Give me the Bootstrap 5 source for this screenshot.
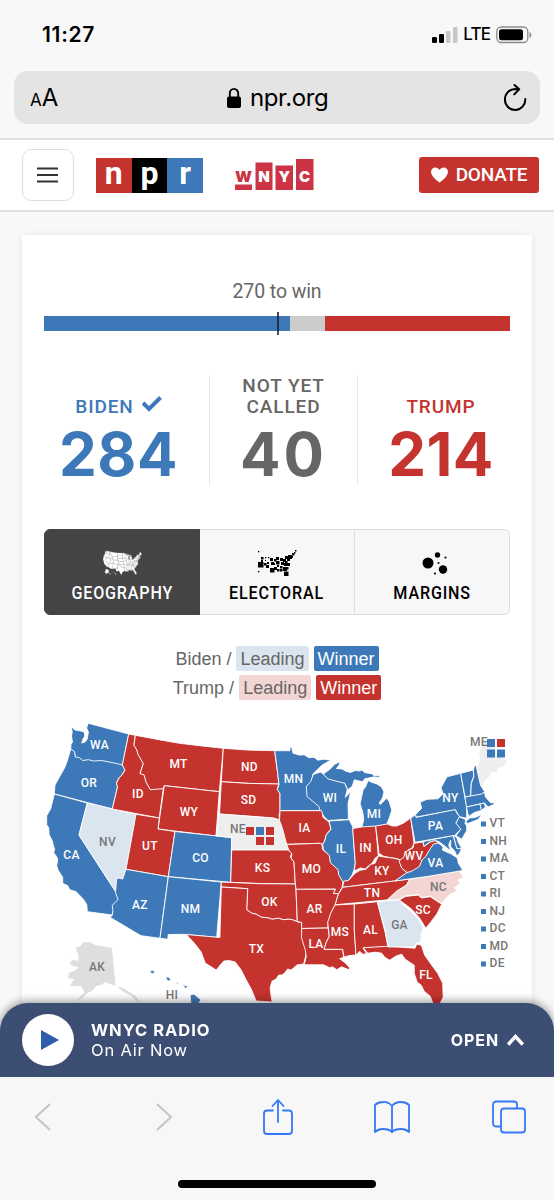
<!DOCTYPE html>
<html lang="en">
<head>
    <meta charset="UTF-8">
    <meta name="viewport" content="width=device-width, initial-scale=1.0">
    <title>Election Results : NPR</title>
    <link href="https://cdn.jsdelivr.net/npm/bootstrap@5.3.0/dist/css/bootstrap.min.css" rel="stylesheet">
    <style>
        :root { --dem: #3d79b8; --rep: #c4332d; --dem-light: #dae5f0; --rep-light: #f3d5d4; }
        body { height: 1200px; overflow: hidden; background: #f8f8f8; font-family: Roboto, "Liberation Sans", sans-serif; }
        svg { display: block; flex: none; }
        .ios { font-family: Inter, "Liberation Sans", sans-serif; color: #000; }
        .status-bar { height: 71px; padding: 0 22px 2px 42px; }
        .clock { font-size: 21px; font-weight: 600; letter-spacing: .7px; }
        .lte { font-size: 17px; font-weight: 500; letter-spacing: -.9px; margin: 0 6px 0 5px; }
        .url-bar { height: 53px; margin: 0 14px; padding: 0 12px 0 16px; border-radius: 14px; background: #e4e4e5; }
        .url-text { font-size: 24px; letter-spacing: -.4px; line-height: 1; }
        .url-site { margin-right: 9px; gap: 5px; }
        .text-size { font-size: 17px; letter-spacing: 0; line-height: 1; }
        .text-size b { font-size: 24px; font-weight: 400; }
        .site-header { height: 74px; margin-top: 14px; padding: 0 15px 0 22px; background: #fff; border-top: 2px solid #dfdfdf; border-bottom: 2px solid #dfdfdf; }
        .menu-btn { width: 52px; height: 52px; border: 1.5px solid #dedede; border-radius: 9px; background: #fff; }
        .menu-btn svg { margin-right: 2px; }
        .npr { width: 107px; height: 35px; margin-left: 22px; font: 700 32px/31px Roboto, sans-serif; color: #fff; }
        .npr span { flex: 1; text-align: center; }
        .wnyc { margin-left: 32px; }
        .donate { width: 120px; height: 36px; padding: 0; border-radius: 3px; background: var(--rep); color: #fff; font-size: 19px; font-weight: 500; letter-spacing: -.2px; }
        .results { width: 510px; height: 790px; margin: 23px auto 0; padding: 0; background: #fff; box-shadow: 0 0 7px rgba(0,0,0,.07); }
        .to-win { padding-top: 45px; font-size: 19.5px; line-height: 24px; letter-spacing: -.1px; color: #666; }
        .ev-bar { height: 15px; margin: 12px 22px 0; position: relative; background: #ccc; }
        .ev-tick { position: absolute; left: 50%; top: -4px; width: 1.5px; height: 23px; background: rgba(30,30,40,.8); }
        .tally { height: 110px; margin: 44px 22px 0; }
        .tally > div { justify-content: flex-end; }
        .t-dem { width: 165px; padding-right: 16px; color: var(--dem); }
        .t-none { width: 149px; border-left: 1.5px solid #e6e6e6; border-right: 1.5px solid #e6e6e6; color: #666; }
        .t-rep { width: 152px; padding-left: 14px; color: var(--rep); }
        .who { font-size: 19px; font-weight: 500; line-height: 21px; letter-spacing: .9px; }
        .votes { font: 700 60px/60px Inter, sans-serif; letter-spacing: .5px; margin: 7px 0 1px; height: 60px; }
        .t-none .votes { letter-spacing: 3px; }
        .views { height: 86px; margin: 44px 22px 0; border-radius: 6px; }
        .views .btn { padding: 11px 0 0; border: 1.5px solid #ddd; background: #f7f7f7; color: #000; font-size: 17.5px; font-weight: 500; letter-spacing: .9px; line-height: 24px; border-radius: 6px; }
        .views .btn svg { margin: 0 auto 5px; }
        .views .btn span { display: inline-block; transform: scaleX(.92); }
        .views .btn.active { background: #444; border-color: #444; color: #fff; }
        .key { margin-top: 31px; gap: 4px; font: 18px/26px "Liberation Sans", Arial, sans-serif; color: #666; }
        .key > div { gap: 5px; height: 25px; }
        .chip { height: 25px; padding: 0 4px; border-radius: 2px; line-height: 27px; }
        .lead-dem { background: var(--dem-light); } .win-dem { background: var(--dem); color: #fff; }
        .lead-rep { background: var(--rep-light); } .win-rep { background: var(--rep); color: #fff; }
        .map { margin-top: 9px; font: 500 12px Roboto, sans-serif; letter-spacing: .3px; }
        .map path { stroke: #fff; stroke-width: .9; stroke-linejoin: round; }
        .player { left: 0; right: 0; top: 1003px; height: 74px; padding: 0 30px 0 22px; border-radius: 28px 28px 0 0; background: #3d4e74; color: #fff; box-shadow: 0 -2px 9px rgba(0,0,0,.4); font-family: Inter, sans-serif; }
        .play { width: 52px; height: 52px; background: #fff; }
        .station { margin-left: 17px; font-size: 16.5px; line-height: 20px; letter-spacing: .8px; }
        .station .fw-bold { letter-spacing: 1px; }
        .open { font-size: 16px; letter-spacing: .9px; }
        .toolbar { left: 0; right: 0; top: 1077px; height: 123px; background: #f7f7f7; }
        .toolbar .tools { height: 80px; padding: 0 28px 0 34px; }
        .home { width: 198px; height: 8px; margin: 23px auto 0; border-radius: 4px; background: #000; }
    </style>
</head>
<body>
    <div class="ios status-bar d-flex align-items-center">
        <span class="clock me-auto">11:27</span>
        <svg width="26" height="18" viewBox="0 0 26 18">
            <rect x="0" y="11" width="5" height="6" rx="1.3"/><rect x="7" y="8" width="5" height="9" rx="1.3"/>
            <rect x="14" y="5" width="4.5" height="12" rx="1.3" fill="#c7c7c7"/><rect x="21" y="1" width="4.5" height="16" rx="1.3" fill="#c7c7c7"/>
        </svg>
        <span class="lte">LTE</span>
        <svg width="36" height="18" viewBox="0 0 36 18">
            <rect x=".8" y="1" width="31" height="15.5" rx="4.5" fill="none" stroke="#8b8b8b" stroke-width="1.3"/>
            <rect x="3" y="3.2" width="24" height="11" rx="2.5"/><path d="M33.5 6v6q2-.8 2-3t-2-3" fill="#8b8b8b"/>
        </svg>
    </div>
    <div class="ios url-bar d-flex align-items-center justify-content-between">
        <span class="text-size">A<b>A</b></span>
        <div class="url-site d-flex align-items-center">
            <svg width="22" height="22" viewBox="0 0 22 22"><rect x="4" y="9.5" width="14" height="11.5" rx="2"/><path d="M6.8 11V6.5a4.2 4.6 0 0 1 8.4 0V11" fill="none" stroke="#000" stroke-width="1.9"/></svg>
            <span class="url-text">npr.org</span>
        </div>
        <svg width="26" height="30" viewBox="0 0 26 30" fill="none" stroke="#000" stroke-width="2" stroke-linecap="round" stroke-linejoin="round"><path d="M13.5 6A10.2 10.5 0 1 0 23.3 16M12.5 2l4.7 4.2-5 5.2M16.6 6.2H13"/></svg>
    </div>

    <header class="site-header d-flex align-items-center">
        <button class="menu-btn d-flex align-items-center justify-content-center p-0">
            <svg width="21" height="16" stroke="#333" stroke-width="2.2"><path d="M0 1.5h21M0 8h21M0 14.5h21"/></svg>
        </button>
        <div class="npr d-flex"><span class="win-rep">n</span><span class="bg-black">p</span><span class="win-dem">r</span></div>
        <svg class="wnyc me-auto" width="80" height="32" font-family="Inter, sans-serif" font-weight="900" font-size="15" text-anchor="middle" fill="#cc3344">
            <path d="M0 25.500h17v5.500H0zM20.500 3.500h17V31h-17zM40.500 6.500h17.500V31H40.500zM61 0h17.500v31H61z"/>
            <text x="8.5" y="22.500" textLength="17" lengthAdjust="spacingAndGlyphs">W</text>
            <g fill="#fff"><text x="29" y="22.500">N</text><text x="49.300" y="22.500">Y</text><text x="69.500" y="22.500">C</text></g>
        </svg>
        <button class="btn donate d-flex align-items-center justify-content-center gap-2">
            <svg width="17" height="16" viewBox="0 0 17 16" fill="#fff"><path d="M8.500 15.500Q0 9.500 0 5C0-.5 6.500-1 8.500 3 10.500-1 17-.5 17 5q0 4.500-8.500 10.500"/></svg>DONATE
        </button>
    </header>

    <main class="results">
        <div class="to-win text-center">270 to win</div>
        <div class="ev-bar d-flex justify-content-between">
            <div class="win-dem" style="width:52.79%"></div>
            <div class="win-rep" style="width:39.78%"></div>
            <i class="ev-tick"></i>
        </div>
        <div class="tally d-flex text-center">
            <div class="t-dem d-flex flex-column">
                <div class="who d-flex justify-content-center">BIDEN
                    <svg class="ms-2" width="20" height="16" fill="none" stroke="#3d79b8" stroke-width="4"><path d="M1 7l6 6L18.500 1.500"/></svg>
                </div>
                <div class="votes">284</div>
            </div>
            <div class="t-none d-flex flex-column"><div class="who">NOT YET<br>CALLED</div><div class="votes">40</div></div>
            <div class="t-rep d-flex flex-column"><div class="who">TRUMP</div><div class="votes">214</div></div>
        </div>
        <div class="views btn-group d-flex">
            <button class="btn active w-100"><svg id="miniMap" width="39" height="26" viewBox="46 722 463 292" fill="#fff"></svg><span>GEOGRAPHY</span></button>
            <button class="btn w-100"><svg id="blocks" width="39" height="26"></svg><span>ELECTORAL</span></button>
            <button class="btn w-100">
                <svg width="39" height="26"><circle cx="15" cy="13" r="5.500"/><circle cx="24.500" cy="5" r="2.700"/><circle cx="30" cy="19.500" r="4.200"/><circle cx="32.500" cy="7.500" r="1.100"/><circle cx="25.500" cy="13" r="1"/><circle cx="22" cy="23.500" r="1.100"/></svg><span>MARGINS</span>
            </button>
        </div>
        <div class="key d-flex flex-column align-items-center">
            <div class="d-flex"><span>Biden /</span><span class="chip lead-dem">Leading</span><span class="chip win-dem">Winner</span></div>
            <div class="d-flex"><span>Trump /</span><span class="chip lead-rep">Leading</span><span class="chip win-rep">Winner</span></div>
        </div>
        <svg id="map" class="map" width="510" height="300" viewBox="22 709 510 300"></svg>
    </main>

    <div class="player position-fixed d-flex align-items-center">
        <div class="play rounded-circle d-flex align-items-center justify-content-center"><svg width="20" height="22" class="ms-1"><path d="M1 1v20l18-10z" fill="#2f5cab"/></svg></div>
        <div class="station me-auto"><div class="fw-bold">WNYC RADIO</div><div>On Air Now</div></div>
        <span class="open fw-bold me-2">OPEN</span>
        <svg width="17" height="12" fill="none" stroke="#fff" stroke-width="3.500"><path d="M1.200 10.500l7.300-8 7.300 8"/></svg>
    </div>
    <footer class="toolbar position-fixed">
        <div class="tools d-flex align-items-center justify-content-between">
            <svg width="17" height="28" fill="none" stroke="#c4c4c6" stroke-width="2"><path d="M16 1L2 14l14 13"/></svg>
            <svg class="ms-4" width="17" height="28" fill="none" stroke="#c4c4c6" stroke-width="2"><path d="M1 1l14 13L1 27"/></svg>
            <svg class="ms-2" width="30" height="38" fill="none" stroke="#3478f6" stroke-width="1.800" stroke-linecap="round" stroke-linejoin="round"><path d="M10 12.500H4a3 3 0 0 0-3 3V33a3 3 0 0 0 3 3h22a3 3 0 0 0 3-3V15.500a3 3 0 0 0-3-3h-6M15 24V2.500M9.500 8L15 2l5.500 6"/></svg>
            <svg width="36" height="34" fill="none" stroke="#3478f6" stroke-width="1.800" stroke-linejoin="round"><path d="M18 6Q14 1.500 9 2 4 2 1 5v27q3-3 8-3 6 0 9 3 3-3 9-3 5 0 8 3V5q-3-3-8-3-6 0-9 4zv25"/></svg>
            <svg width="35" height="34" fill="none" stroke="#3478f6" stroke-width="1.800"><path d="M9 26.500H5a3 3 0 0 1-3-3V4.500a3 3 0 0 1 3-3h18a3 3 0 0 1 3 3v4"/><rect x="10" y="8.500" width="24" height="24" rx="3"/></svg>
        </div>
        <div class="home"></div>
    </footer>

    <script src="https://cdn.jsdelivr.net/npm/bootstrap@5.3.0/dist/js/bootstrap.bundle.min.js"></script>
    <script>
        const colors = { d: "#3d79b8", r: "#c4332d", dl: "#dae5f0", rl: "#f3d5d4", n: "#eeeeee", a: "#dedede" };

        // [status, label, label x, label y, outline]
        const states = [
            ["d", "WA", 99.5, 745, "M71.300 726l3.500 4 6 1 3.500 1 .5 4-1.800 3-1.300 4 3.500-1 2-3 1.200-7-1.800-4 1.500-4.800 40.600 10.800-6.400 32-9-2-11.500-2.300-8 .5-5.500-1.300-5.500.8-3.500-3-4-.5-.8-5.500-3.800-2.500.3-6 1.500-2-1-6 .7-4z"],
            ["d", "OR", 89, 783, "M70.700 749l3.800 2.500.8 5.500 4 .5 3.500 3 5.500-.8 5.500 1.300 8-.5 11.500 2.300 9 2 2.700 5-3 5-3 3-2.500 5 1 4-5.200 22.200-58-15 .7-9 5-9 5-9 2.500-7z"],
            ["d", "CA", 71.5, 855, "M54.300 794l33 9-8.300 32 36.700 56.700 3.300 7.600-5.700 5.700 1 4-2 6-25-3.300-.5-7-3.500-5.500-7.100-7.500-6.500-2-2-4-5-2.400 0-6-4.500-7-1.500-4.600 1-6-1-3-3-4 1-4-1-2-1.500-6-3-6-.5-7-2-3 0-9 4-7z"],
            ["dl", "NV", 107.5, 841.5, "M87.300 803l48.700 11.300-10 55-3.300 10-4-1.500-2 8-1 5.900L79 835z"],
            ["r", "ID", 138, 794, "M128.700 734l6.600 1.300-1.300 9.700 3 5 1 4 5.300 9.300-3.300 10 4 1 2.300 8 4 7 6-.5 7-.5-4 29.700-47-9 5.200-22-1-4 2.500-5 3-3 3-5-2.700-5z"],
            ["r", "MT", 178.5, 764, "M135.300 735.300q44 9.500 88 13l-4 43.400-55-6-1 3-7 .5-6 .5-4-7-2.300-8-4-1 3.300-10-5.300-9.300-1-4-3-5z"],
            ["r", "WY", 189, 812, "M164.300 785.700l55 6-3.300 44.300-58-7z"],
            ["r", "UT", 150, 846, "M136 814.300l23.300 3.700-1.300 11 17 2.500-6.700 45.200-42.300-7.400z"],
            ["d", "CO", 200.5, 858, "M175 831.500l56.700 6-1 44.800-62.400-5.600z"],
            ["d", "AZ", 140, 905, "M126 869.300l42.300 7.400-8.300 61.600-19-2.600-31-18.400 2.300-2 .5-5-.5-5 5.700-5.700-2.500-7 1.200-14 2.500-.5 3.500 1z"],
            ["d", "NM", 190.5, 909, "M168.300 876.700l53 5.300-4.600 55.300-33.400-3-15 .2-.6 4.800-7.700-1z"],
            ["r", "ND", 249.5, 767, "M223.300 748.300q25 2.400 51.400 2.400l1.500 12 1.500 10 1 11.300q-30 0-57.400-2.300z"],
            ["r", "SD", 248.5, 800, "M221.300 781.700q27 2.300 57.400 2.300l-1.400 5.300 2.700 4v17.400l-1 4 .5 5.300-6-2-6-.5-6-.5-42-3z"],
            ["n", "NE", 238, 829, "M219.300 814l42.400 3.300 10.500.7 7.500 2 3.600 10 2.700 10 2.300 10h-56.600v-12.500l-15.700-1.500z"],
            ["r", "KS", 262.5, 867.5, "M231.700 850h56.600l3.500 3-1.500 4 3.700 5 1.300 22q-32 .2-64.600-1.700z"],
            ["r", "OK", 269.500, 901.500, "M221.300 882q37 2.300 74 2l.7 5.300 1.300 32.400-5-2-4-.5-5 .5-5-1.500-6 1-5-1.500-6-.5-5-3-4.600-1-5-3.500 1-21-26.400-1.700z"],
            ["r", "TX", 256.5, 948.5, "M221.300 887l26.400 1.700-1 21 5 3.500 4.600 1 5 3 6 .5 5 1.500 6-1 5 1.500 5-.5 4 .5 5 2 4.400 1 .3 14.600 4.700 12.700-1 6-2 8-7 1-3 3-3 2-3-1-3 4-3 2-3 0-2.500 4-4 2-1 3-1 4 .5 5 1.500 9-16-1-5-12-5-9-5-10-6-8-6-1.500-5.500.5-7.500 9-11-7-4-11-7-9-8-8.500 33.700 3z"],
            ["d", "MN", 293.5, 779, "M274.700 750.700h15.300v-4l1.700.5 1.300 6 7 2 4-.5 5 3 5-.5 4 3 5-1 8 .8-9 5.200-9 8.600-1.500 8-4.400 4 .7 10 12.400 9.700 1.500 5h-41.700v-17l-2.700-4 1.700-5-1.300-11-1.500-12z"],
            ["d", "WI", 330, 798, "M313.300 774.500l7-2.500 3 2 4 4 9 2.500 8 2 3 6.800-2 8 5.400-5.500-2.700 12 .5 15.500-20.500 1.200-4-4-4-6-1-4-12-10-.7-10 4.400-5z"],
            ["d", "", 0, 0, "M323.300 774l7-5 4-4.500 6-3-1.500 4-2.500 3 6 .5 3 2 5 1.500 5-2 4 .5 3-1 2 2.500 8 1.300 1 1.500 6 .5 1 2-6-1-4.500 1-5 1-2.500 3-8-2-2 6.500-4.500 3.500-3-6.500-8-2-9-2.500z"],
            ["d", "MI", 374, 813.500, "M368 780.500l3 1.500 6 2 4.500 3 2.500 5-1.500 6-3.200 5 1 1.500 6.500-6.500 2.500 4 2.500 8-2.500 8-2.600 6.300-11 2.500-14 1 2-8-.8-7-2.800-9 1.500-7 1.500-7 2.500-3z"],
            ["r", "IA", 304.5, 828, "M280 810.700h41.700l1.300 6.600 6 4.700 2 7-5 6-1 5-2.300 4.500-2.700-1.200-33.300 1-1.700-6-2-8-3.500-10z"],
            ["r", "MO", 311.5, 869, "M286.700 844.500l33.300-1.200 2 1.200.7 5 7 6 1 7 7.600 7 .7 5 4 7-1 6-3.700 6.500-5-.7 2-4.300-39.300.3-.7-5.300-1.300-22-3-4 1-4-2.700-3z"],
            ["d", "IL", 341, 849, "M329 821l20.300-1.300 3.400 7 1.600 24 1 12-1 6-2 6-4 6-5.600 1-4-7-.7-5-7.600-7-1-7-6-6-.7-5 2.300-4.500 1-5 5-6z"],
            ["r", "IN", 365.5, 848, "M352.700 828.500l8.600-1.500 14.400-1 2.600 30-3 2-3 5-4 3-3 3-5-1-6 3 1-8z"],
            ["r", "OH", 394, 840, "M375.700 826l11.600-2 5 2 4.400 0 7-3 7-5 3.300 25-2 5-4 2-3 7-4 3-5-1.500-6-1-6-1-5-3z"],
            ["r", "KY", 382, 871, "M401.700 868l5.300 5-12 8-42 5-10.300 1.300 1-6 5-1 6.300-7 5-3 6-1 5-5 4-1 3.300-7.300 6 1 8 1 7 1.500z"],
            ["r", "TN", 372, 893, "M342.700 887.300l10.600-1.300 56.700-7-3.300 6-10 6.500-8.700 8.300-53 5 3-10z"],
            ["r", "AR", 314.5, 909, "M296 889.300h39.300l-2 4.300h5l-3.300 11.400-4 8-3 9 0 6-26.300.5v-6l-4.400-1z"],
            ["r", "LA", 316, 944, "M301.700 928.500l26.300-.5 1.300 8-3 6-2.300 7.300h18.700l1 8-4 1.500 6 4.500 4 4.500-1 2-7-3-5 3-4-3-3 1-6-3-9 0-10.500 0 2-8-.7-6-4-13z"],
            ["r", "MS", 340, 931.500, "M335 905l19.300-1 0 26 1.700 25-6 .5-6 1.500-1.300-7.700h-18.700l2.300-7 3-6-1.600-14 3-9z"],
            ["r", "AL", 370.500, 930, "M354.300 904l23-2.300 7.700 30 3 15-25 1.500 3.700 5.500-4 .5-3-3-3.700 4-1.700-25z"],
            ["r", "FL", 426, 974.500, "M363.300 947.700l25-1.500 26.700 2 1.700-4 4.600 1 3.400 10 7 10 6 8 5 10 .5 14-4 8-6-1-3-8-6-5-3-6-4-3-3-9 0-8-9-6-3.500-5-6 2-6 4-5-3-3-4-6-1-8 1z"],
            ["dl", "GA", 399.5, 924.5, "M377.300 901.700l22-2 4 5 8 7 8 9 4 7-2 6-1 9-4.300.5-1.300 3.500-26.400.3-3.300-17z"],
            ["r", "SC", 423, 909.5, "M399.300 900l6-3.500 13-1.500 3 3 9-1.300 11.400 7.500-5 10-6 8-5 6-6-10-8-9-8-6z"],
            ["rl", "NC", 438.500, 887, "M409.300 879.300q25-4 50-8.600l4 7-5 2 2 4-6 4 2.700 3-8.700 5-7 8-10.600-7.500-9 1.300-3-3-14 1.500-6 3.500-11.700.5 9.700-9 10-6z"],
            ["r", "WV", 414, 856, "M414 843.300l9-1.300 1 4.500 6-4.500 5-1.500 3.500 2.500-5 1.500-4 6-3.500 6-4 4-2 6.500-8.500 5-4.500 .5-5.300-4.500-2.700-7 5-4 1-5 4-2 4-2z"],
            ["d", "VA", 435.5, 863, "M438.300 843l5 4-1 3 9 4 6 4 1 5 4.500 7.500q-33 6-67.800 10.500l12-8.500 4-1 8.500-5 2.500-6.500 4-4 3.500-6 4-6z"],
            ["d", "", 0, 0, "M423 841.500l30-6 4 13 4.700-.5-2 5-3 3-2-5-4-4 0-7-2 5 2 6-6-5-6-4.500-4-1-6 2-4.700 4z"],
            ["d", "", 0, 0, "M453.300 835.500l3.500 2 1.500 5 3.400 5.500-4.700.8z"],
            ["d", "PA", 435.5, 826, "M410.700 818.300l5-4 .5 3 38.800-8 2 4 3 3.500-4 6 5 6-6 6.500-40 7z"],
            ["d", "", 0, 0, "M459.300 816.700l6.500 3-.8 4 1.700 2 0 5-5 8.500-5.700-3.500 4.700-6.500-4.700-6z"],
            ["d", "NY", 450.5, 798, "M415.700 814.300l6-6-1.700-6 7-3 11-.5 5-5-2-6 6-11 13.700-3.500 4 23 2 10 0 12-7.400-1.700-4-7-39.300 7.500z"],
            ["d", "", 0, 0, "M465.500 822l4-4 5.500-.5 7-3-4 5-10 4z"],
            ["d", "", 0, 0, "M460.700 773.300l12.600-3.300.5 6-2.500 7-.6 13-5.700 1z"],
            ["d", "", 0, 0, "M473.300 770l1.500-5 1.700 1.500 5 20 3 5-3 3-10.800 2 .6-13 2.500-7z"],
            ["d", "", 0, 0, "M465 797l16.500-3 3-2 1 5 3.500 4 2 2 4-1-2 3-5 2-3.500-4-18 4z"],
            ["d", "", 0, 0, "M466.500 807l13.500-3 1.500 6.500-7 2-6 4z"],
            ["d", "", 0, 0, "M480 804l4-1 1.500 4-4 3.500z"],
            ["n", "ME", 479, 742, "M476.700 768l3-9-1-6 4-10 6-2 5 2 3 10 4 4 7 4-4 6-5 1-2 5-5-1-2 5-5 4-2 6-2-1z"],
            ["a", "AK", 97, 966.5, "M75 947l5-1 3-4 7-.5 5 3 17.300 3 3.700 39-6-2-5-2-4 3-5 1-4 5-5 2-5 5-6 3 5-6 3-3-3-6-5 0-7 0 3-5 2-2-7-1 2-6 7-3 2-2-5-1-4-3 3-4 6 1 0-5z"],
            ["a", "", 0, 0, "M116 986l6 1 8 5 6 4 5 8-5-3-5-5-8-4z"],
            ["d", "HI", 172, 995, "M149.500 972l2.500-2 3 1.500-2 2.500zM165.500 977l3 0 3 3.500-4 .5zM175 982.500l4 .5-1 1.500zM182.500 984.500l6 2-3 2zM190 995l4-1 7 6-3 4-7 0z"]
        ];
        const seats = [["r", 246, 827], ["d", 256, 827], ["r", 266, 827], ["r", 256, 837], ["r", 266, 837],
            ["d", 487, 739], ["r", 497, 739], ["d", 487, 749.5], ["d", 497, 749.5]];

        let shapes = "", labels = "", mini = "";
        for (const [status, name, x, y, d] of states) {
            shapes += `<path d="${d}" fill="${colors[status]}"/>`;
            mini += `<path d="${d}" stroke="#bbb" stroke-width="3"/>`;
            if (x) {
                const dark = ["dl", "rl", "n", "a"].includes(status) || name === "HI";
                labels += `<text x="${x}" y="${y + 4}" text-anchor="middle" fill="${dark ? "#777" : "#fff"}">${name}</text>`;
            }
        }
        for (const [status, x, y] of seats) {
            labels += `<rect x="${x}" y="${y}" width="8" height="8" fill="${colors[status]}"/>`;
        }
        ["VT", "NH", "MA", "CT", "RI", "NJ", "DC", "MD", "DE"].forEach((name, i) => {
            const y = 822.500 + i * 17.500;
            labels += `<rect x="481" y="${y - 1}" width="5" height="5" fill="${colors.d}"/><text x="489.500" y="${y + 4.500}" fill="#777">${name}</text>`;
        });
        document.getElementById("map").innerHTML = shapes + labels;
        document.getElementById("miniMap").innerHTML = mini;

        // x, y, size of each state's block
        const blocks = [[0,1,1.300],[0,21,1.300],[3,7,2.500],[7,7,1.300],[10,7,1.300],[3,10,2],[7,10,1],[9,12,2],[0,12,5.500],[6,13,2.500],[8,15,3],[12,8,3],[13,12,3],[16,9,2.500],[15,13,2],
            [18,7,3],[18,11,3.500],[19,15,2],[12,18,4.500],[16,17,3],[19,19,2.500],[22,8,3],[23,12,3],[22,16,2.500],[25,9,3],[26,13,3],[25,17,4],[27,6,3],[29,8,3],[30,5,4],[29,13,3],[27,11,2.500],[33,6,2],[34,3,2.500],[36,2,1.500],[37,0,1.500],[26,21.500,4.500],[22,19,2.500],[28,17,2.500]];
        document.getElementById("blocks").innerHTML = blocks.map(([x, y, s]) => `<rect x="${x}" y="${y}" width="${s}" height="${s}"/>`).join("");
    </script>
</body>
</html>
